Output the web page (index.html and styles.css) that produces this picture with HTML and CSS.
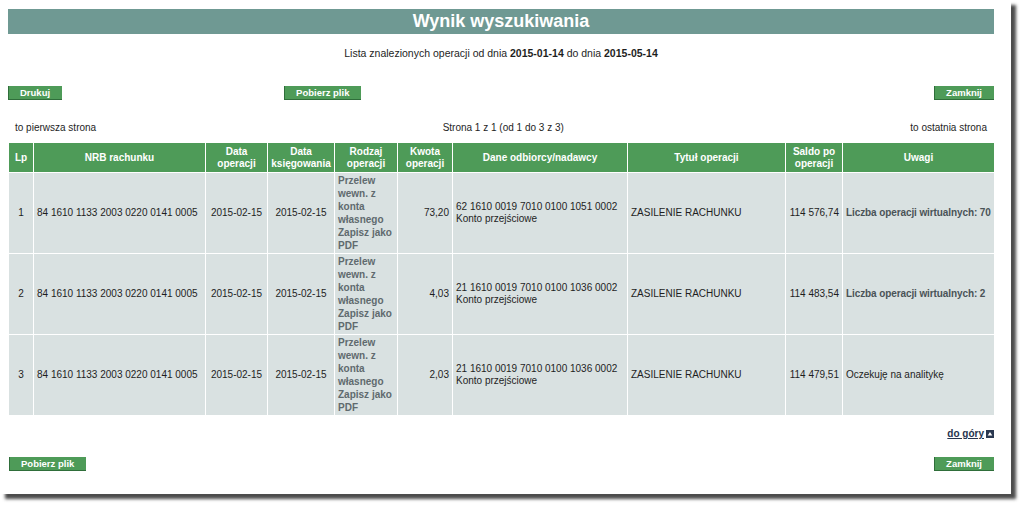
FILE: index.html
```html
<!DOCTYPE html>
<html lang="pl">
<head>
<meta charset="utf-8">
<title>Wynik wyszukiwania</title>
<link rel="stylesheet" href="styles.css">
</head>
<body>
<div class="frame">
  <div class="content">
    <h1 class="title">Wynik wyszukiwania</h1>
    <p class="subtitle">Lista znalezionych operacji od dnia <b>2015-01-14</b> do dnia <b>2015-05-14</b></p>
    <div class="btnrow top">
      <span class="btn">Drukuj</span>
      <span class="btn mid">Pobierz plik</span>
      <span class="btn right">Zamknij</span>
    </div>
    <div class="pager">
      <span>to pierwsza strona</span>
      <span>Strona 1 z 1 (od 1 do 3 z 3)</span>
      <span>to ostatnia strona</span>
    </div>
    <table class="ops">
      <colgroup>
        <col class="c-lp"><col class="c-nrb"><col class="c-dop"><col class="c-dks"><col class="c-rodz"><col class="c-kw"><col class="c-dane"><col class="c-tyt"><col class="c-saldo"><col class="c-uw">
      </colgroup>
      <thead>
        <tr>
          <th>Lp</th><th>NRB rachunku</th><th>Data<br>operacji</th><th>Data<br>księgowania</th><th>Rodzaj<br>operacji</th><th>Kwota<br>operacji</th><th>Dane odbiorcy/nadawcy</th><th>Tytuł operacji</th><th>Saldo po<br>operacji</th><th>Uwagi</th>
        </tr>
      </thead>
      <tbody>
        <tr>
          <td class="ctr">1</td><td>84 1610 1133 2003 0220 0141 0005</td><td class="ctr">2015-02-15</td><td class="ctr">2015-02-15</td>
          <td class="rodz">Przelew wewn. z konta własnego Zapisz jako PDF</td>
          <td class="num">73,20</td><td>62 1610 0019 7010 0100 1051 0002<br>Konto przejściowe</td><td>ZASILENIE RACHUNKU</td><td class="num">114 576,74</td><td class="note">Liczba operacji wirtualnych: 70</td>
        </tr>
        <tr>
          <td class="ctr">2</td><td>84 1610 1133 2003 0220 0141 0005</td><td class="ctr">2015-02-15</td><td class="ctr">2015-02-15</td>
          <td class="rodz">Przelew wewn. z konta własnego Zapisz jako PDF</td>
          <td class="num">4,03</td><td>21 1610 0019 7010 0100 1036 0002<br>Konto przejściowe</td><td>ZASILENIE RACHUNKU</td><td class="num">114 483,54</td><td class="note">Liczba operacji wirtualnych: 2</td>
        </tr>
        <tr>
          <td class="ctr">3</td><td>84 1610 1133 2003 0220 0141 0005</td><td class="ctr">2015-02-15</td><td class="ctr">2015-02-15</td>
          <td class="rodz">Przelew wewn. z konta własnego Zapisz jako PDF</td>
          <td class="num">2,03</td><td>21 1610 0019 7010 0100 1036 0002<br>Konto przejściowe</td><td>ZASILENIE RACHUNKU</td><td class="num">114 479,51</td><td>Oczekuję na analitykę</td>
        </tr>
      </tbody>
    </table>
    <div class="totop">
      <a class="uplink" href="#">do góry</a>
      <svg class="upicon" width="8" height="8" viewBox="0 0 8 8" aria-hidden="true"><rect x="0" y="0" width="8" height="8" fill="#2a3850"/><path d="M4 2 L6.3 5.5 L1.7 5.5 Z" fill="#ffffff"/></svg>
    </div>
    <div class="btnrow bottom">
      <span class="btn">Pobierz plik</span>
      <span class="btn right">Zamknij</span>
    </div>
  </div>
</div>
</body>
</html>
```
FILE: styles.css
```css
html, body {
  margin: 0;
  padding: 0;
  background: #ffffff;
}
body {
  font-family: "Liberation Sans", Arial, sans-serif;
  font-size: 10px;
  color: #1e1e1e;
  width: 1024px;
  height: 506px;
  overflow: hidden;
}
.frame {
  width: 1011px;
  height: 494px;
  background: #ffffff;
  box-shadow: 5px 5px 3px rgba(45, 45, 45, 0.85);
}
.content {
  padding: 9px 17px 0 8px;
}
.title {
  margin: 0;
  height: 25px;
  line-height: 25px;
  background: #6f9993;
  color: #ffffff;
  font-size: 18px;
  font-weight: bold;
  text-align: center;
}
.subtitle {
  margin: 13px 0 0;
  text-align: center;
  font-size: 10.5px;
  line-height: 12px;
}
.btnrow {
  display: flex;
  align-items: center;
}
.btnrow.top {
  margin-top: 27px;
}
.btn {
  display: inline-block;
  height: 14px;
  line-height: 13px;
  padding: 0 12px;
  background: #4e9b58;
  color: #ffffff;
  font-weight: bold;
  font-size: 9.5px;
  box-shadow: inset 1px -1px 0 #2f6e3a;
  box-sizing: border-box;
}
.btn.mid {
  margin-left: 222px;
}
.btn.right {
  margin-left: auto;
}
.pager {
  display: flex;
  justify-content: space-between;
  margin-top: 22px;
  padding: 0 7px;
  line-height: 12px;
}
.ops {
  margin-top: 8px;
  width: 986px;
  table-layout: fixed;
  border-collapse: collapse;
}
.c-lp { width: 25px; }
.c-nrb { width: 172px; }
.c-dop { width: 62px; }
.c-dks { width: 67px; }
.c-rodz { width: 63px; }
.c-kw { width: 55px; }
.c-dane { width: 175px; }
.c-tyt { width: 158px; }
.c-saldo { width: 57px; }
.c-uw { width: 152px; }
.ops th {
  background: #4e9b58;
  color: #ffffff;
  font-weight: bold;
  font-size: 10px;
  line-height: 12px;
  height: 30px;
  padding: 0 2px;
  border: 1px solid #ffffff;
  text-align: center;
  vertical-align: middle;
  box-sizing: border-box;
}
.ops td {
  background: #d9e1e1;
  border: 1px solid #ffffff;
  height: 81px;
  padding: 0 3px;
  vertical-align: middle;
  line-height: 12px;
  white-space: nowrap;
  box-sizing: border-box;
}
.ops td.ctr {
  text-align: center;
}
.ops td.num {
  text-align: right;
}
.ops td.rodz {
  white-space: normal;
  color: #606a6e;
  font-weight: bold;
  line-height: 13px;
  padding: 0 3px;
}
.ops td.note {
  color: #4a5357;
  font-weight: bold;
  letter-spacing: -0.1px;
}
.totop {
  display: flex;
  justify-content: flex-end;
  align-items: center;
  gap: 2px;
  margin-top: 12px;
}
.uplink {
  color: #26334d;
  font-weight: bold;
  text-decoration: underline;
  font-size: 10px;
}
.upicon {
  display: block;
}
.btnrow.bottom {
  margin-top: 18px;
  padding-left: 1px;
}
```
